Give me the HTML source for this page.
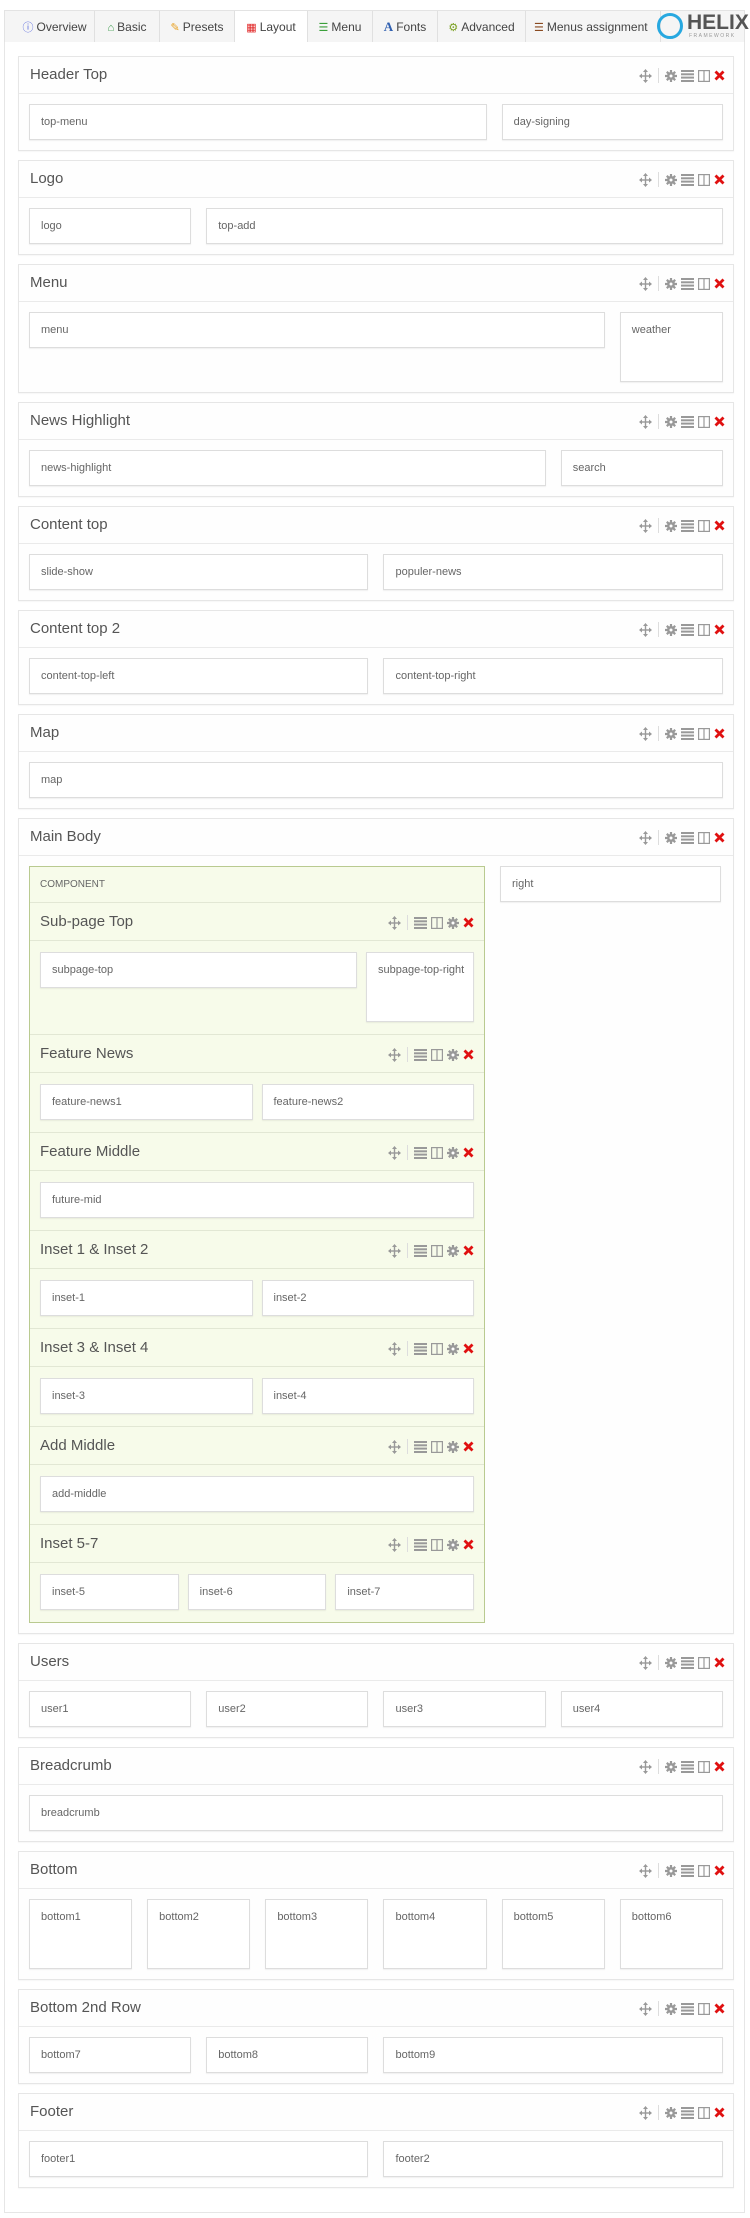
<!DOCTYPE html>
<html><head><meta charset="utf-8">
<style>
*{box-sizing:border-box;margin:0;padding:0}
body{width:750px;height:2218px;background:#fff;font-family:"Liberation Sans",sans-serif;color:#555;position:relative;overflow:hidden}
.tabs{position:absolute;top:10px;left:4px;width:741px;height:33px;background:#f5f5f5;border:1px solid #e3e3e3;border-bottom:1px solid #ddd}
.tab{position:absolute;top:0;height:32px;border-right:1px solid #e0e0e0;font-size:12px;line-height:32px;text-align:center;color:#444}
.tab.act{background:#fff;height:33px}
.tab i{font-style:normal;font-size:11px;margin-right:3px}
.panel{position:absolute;top:42px;left:4px;width:741px;height:2171px;border:1px solid #e6e6e6;border-top:none;background:#fff;padding-top:14px}
.sec{margin-left:13px;width:716px;border:1px solid #e6e6e6;background:#fefefe;margin-bottom:9px;box-shadow:0 1px 1px rgba(0,0,0,.04)}
.hd{height:37px;border-bottom:1px solid #eaeaea;position:relative;font-size:15px;line-height:36px;padding-left:11px;color:#555}
.bd{padding:10px;display:flex;gap:15px;align-items:flex-start}
.bx{height:36px;border:1px solid #ddd;background:#fff;box-shadow:0 1px 1px rgba(0,0,0,.06);font-size:11px;color:#666;padding:11px 0 0 11px;flex:none}
.ic{position:absolute;right:8px;top:11px;display:flex;gap:4px;align-items:center}
.ic svg{display:block}
.sep{width:1px;height:15px;background:#ddd;margin:0 2px}
.comp{width:456px;background:#f7fbea;border:1px solid #b9ca90;flex:none}
.clab{height:36px;border-bottom:1px solid #e2e7d4;font-size:10px;line-height:36px;padding-left:10px;color:#666}
.sh{height:38px;border-bottom:1px solid #e2e7d4;position:relative;font-size:15px;line-height:38px;padding-left:10px;color:#555}
.sb{padding:11px 10px 12px;display:flex;gap:9px;align-items:flex-start;border-bottom:1px solid #e2e7d4}
.sb:last-child{border-bottom:none}
.sb .bx{flex:1 1 0}
</style></head><body>
<div class="tabs">
<div class="tab" style="left:10px;width:80px"><i style="color:#5a6adf">&#9432;</i>Overview</div>
<div class="tab" style="left:90px;width:65px"><i style="color:#3a9a4a">&#8962;</i>Basic</div>
<div class="tab" style="left:155px;width:75px"><i style="color:#e8a020">&#9998;</i>Presets</div>
<div class="tab act" style="left:230px;width:73px"><i style="color:#e02020">&#9638;</i>Layout</div>
<div class="tab" style="left:303px;width:65px"><i style="color:#3aa03a">&#9776;</i>Menu</div>
<div class="tab" style="left:368px;width:65px"><i style="color:#3060b0;font-family:'Liberation Serif';font-weight:bold;font-size:13px">A</i>Fonts</div>
<div class="tab" style="left:433px;width:88px"><i style="color:#7aa020">&#9881;</i>Advanced</div>
<div class="tab" style="left:521px;width:135px;text-align:left;padding-left:8px"><i style="color:#8a4a20">&#9776;</i>Menus assignment</div>
<div style="position:absolute;left:652px;top:2px;width:26px;height:26px;border:3px solid #27a8e0;border-radius:50%"></div>
<div style="position:absolute;left:682px;top:1px;font-size:21px;font-weight:bold;color:#555;line-height:22px;letter-spacing:0">HELIX</div>
<div style="position:absolute;left:684px;top:22px;font-size:5px;color:#999;letter-spacing:1.5px">FRAMEWORK</div>
</div>

<div class="panel" id="p"></div>

<script>
const mv='<svg width="13" height="14" viewBox="0 0 13 14"><path d="M6.5 0L4 3h5zM6.5 14L4 11h5zM0 7l3-2.5v5zM13 7l-3-2.5v5z" fill="#999"/><rect x="5.8" y="2" width="1.4" height="10" fill="#999"/><rect x="2" y="6.3" width="9" height="1.4" fill="#999"/></svg>';
const gr='<svg width="12" height="12" viewBox="0 0 12 12"><circle cx="6" cy="6" r="4" fill="#999"/><g stroke="#999" stroke-width="2.2"><path d="M6 0v12M0 6h12M1.8 1.8l8.4 8.4M10.2 1.8l-8.4 8.4"/></g><circle cx="6" cy="6" r="1.5" fill="#fff"/></svg>';
const br='<svg width="13" height="12" viewBox="0 0 13 12"><g fill="#999"><rect y="0" width="13" height="2"/><rect y="3.3" width="13" height="2"/><rect y="6.6" width="13" height="2"/><rect y="10" width="13" height="2"/></g></svg>';
const co='<svg width="12" height="12" viewBox="0 0 12 12"><rect x="0.6" y="0.6" width="10.8" height="10.8" fill="none" stroke="#999" stroke-width="1.2"/><rect x="5.4" y="0.6" width="1.2" height="10.8" fill="#999"/></svg>';
const xx='<svg width="11" height="11" viewBox="0 0 11 11"><path d="M1.5 1.5l8 8M9.5 1.5l-8 8" stroke="#e01010" stroke-width="2.8"/></svg>';
const icM='<div class="ic">'+mv+'<span class="sep"></span>'+gr+br+co+xx+'</div>';
const icS='<div class="ic" style="right:10px;top:12px">'+mv+'<span class="sep"></span>'+br+co+gr+xx+'</div>';
const W=n=>n*59.08-15;
function bx(t,n,h){return '<div class="bx" style="width:'+W(n)+'px'+(h?';height:'+h+'px':'')+'">'+t+'</div>'}
function sec(t,inner){return '<div class="sec"><div class="hd">'+t+icM+'</div><div class="bd">'+inner+'</div></div>'}
function sub(t,inner){return '<div class="sh">'+t+icS+'</div><div class="sb">'+inner+'</div>'}
function sbx(t,f,h){return '<div class="bx" style="flex:'+f+' 1 0'+(h?';height:'+h+'px':'')+'">'+t+'</div>'}
let h='';
h+=sec('Header Top',bx('top-menu',8)+bx('day-signing',4));
h+=sec('Logo',bx('logo',3)+bx('top-add',9));
h+=sec('Menu',bx('menu',10)+bx('weather',2,70));
h+=sec('News Highlight',bx('news-highlight',9)+bx('search',3));
h+=sec('Content top',bx('slide-show',6)+bx('populer-news',6));
h+=sec('Content top 2',bx('content-top-left',6)+bx('content-top-right',6));
h+=sec('Map',bx('map',12));
let c='<div class="comp"><div class="clab">COMPONENT</div>';
c+=sub('Sub-page Top',sbx('subpage-top',3.2)+sbx('subpage-top-right',1,70));
c+=sub('Feature News',sbx('feature-news1',1)+sbx('feature-news2',1));
c+=sub('Feature Middle',sbx('future-mid',1));
c+=sub('Inset 1 &amp; Inset 2',sbx('inset-1',1)+sbx('inset-2',1));
c+=sub('Inset 3 &amp; Inset 4',sbx('inset-3',1)+sbx('inset-4',1));
c+=sub('Add Middle',sbx('add-middle',1));
c+=sub('Inset 5-7',sbx('inset-5',1)+sbx('inset-6',1)+sbx('inset-7',1));
c+='</div>';
h+=sec('Main Body',c+bx('right',4));
h+=sec('Users',bx('user1',3)+bx('user2',3)+bx('user3',3)+bx('user4',3));
h+=sec('Breadcrumb',bx('breadcrumb',12));
h+=sec('Bottom',[1,2,3,4,5,6].map(i=>bx('bottom'+i,2,70)).join(''));
h+=sec('Bottom 2nd Row',bx('bottom7',3)+bx('bottom8',3)+bx('bottom9',6));
h+=sec('Footer',bx('footer1',6)+bx('footer2',6));
document.getElementById('p').innerHTML=h;
</script>
</body></html>
